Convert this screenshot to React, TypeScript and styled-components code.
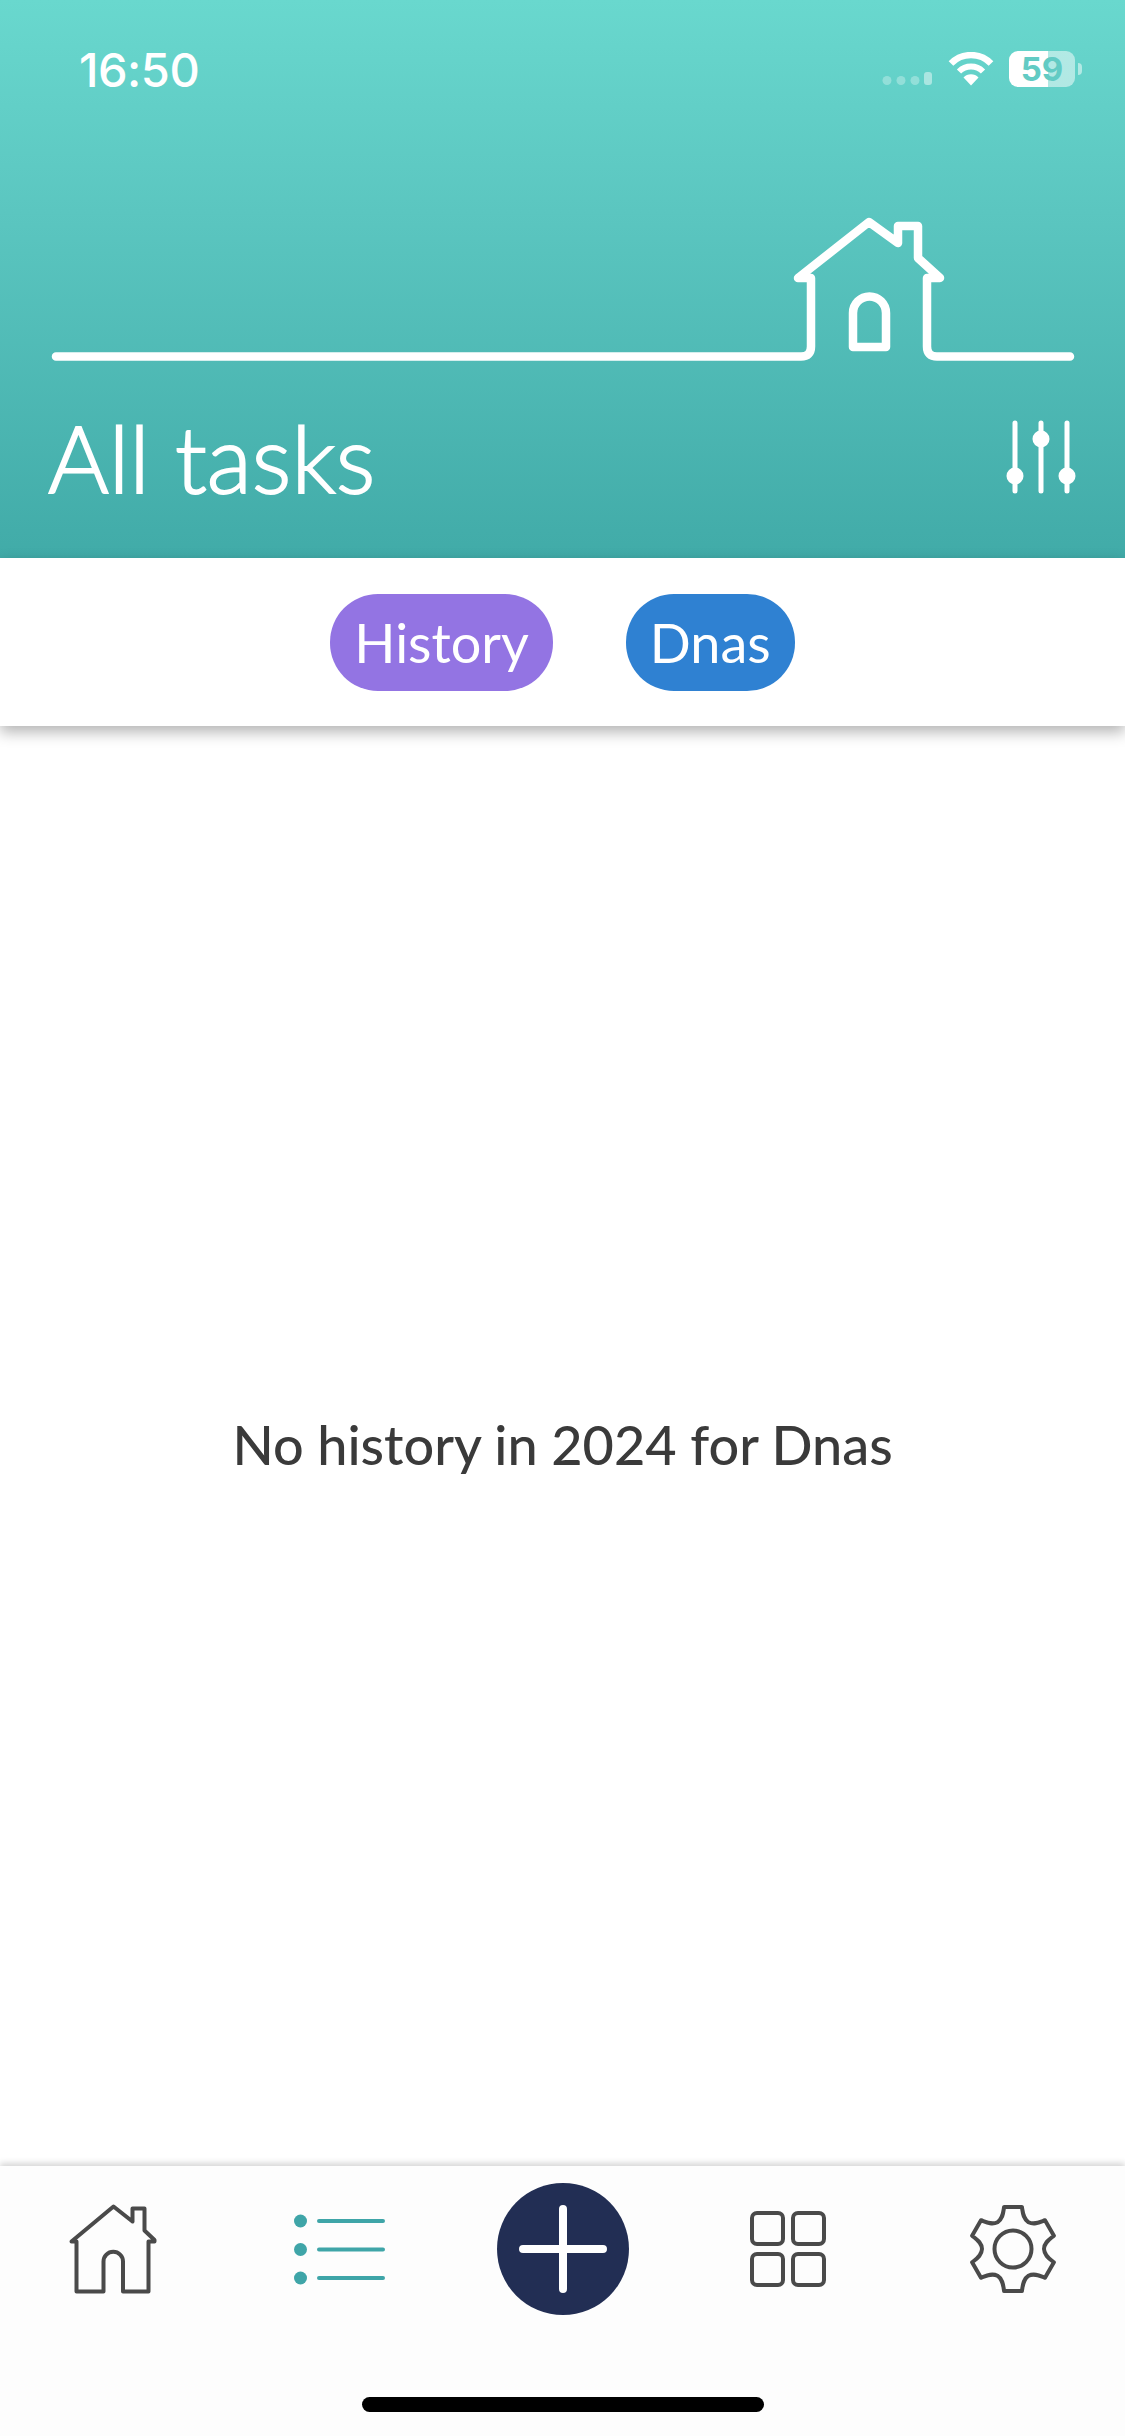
import React from "react";
import styled, { createGlobalStyle } from "styled-components";

const GlobalStyle = createGlobalStyle`
  html, body {
    margin: 0;
    padding: 0;
    background: #ffffff;
  }
  body {
    font-family: "Lato", "Open Sans", sans-serif;
  }
`;

const Page = styled.div`
  width: 1125px;
  height: 2436px;
  display: flex;
  flex-direction: column;
  overflow: hidden;
  background: #ffffff;
`;

const Header = styled.header`
  height: 558px;
  flex: none;
  display: flex;
  flex-direction: column;
  background: linear-gradient(180deg, #69d8ce 0%, #5bc6c0 38%, #41aba8 100%);
`;

const StatusBar = styled.div`
  height: 44px;
  margin-top: 47px;
  padding: 0 50px 0 79px;
  display: flex;
  align-items: center;
  justify-content: space-between;
`;

const Clock = styled.span`
  font-family: "Inter", "Liberation Sans", sans-serif;
  font-size: 47px;
  font-weight: 500;
  letter-spacing: -0.5px;
  color: #ffffff;
`;

const StatusIcons = styled.div`
  display: flex;
  align-items: center;
`;

const SignalIcon = styled.svg`
  margin-top: 17px;
`;

const WifiIcon = styled.svg`
  margin-left: 16px;
`;

const Battery = styled.div`
  position: relative;
  width: 66px;
  height: 36px;
  margin-left: 15px;
  border-radius: 9px;
  background: linear-gradient(90deg, #ffffff 59%, rgba(255, 255, 255, 0.5) 59%);
  display: flex;
  align-items: center;
  justify-content: center;
  font-family: "Inter", "Liberation Sans", sans-serif;
  font-size: 33px;
  font-weight: 700;
  color: #62cbc4;

  &::after {
    content: "";
    position: absolute;
    right: -7px;
    top: 12px;
    width: 4px;
    height: 12px;
    border-radius: 0 6px 6px 0;
    background: rgba(255, 255, 255, 0.5);
  }
`;

const Skyline = styled.svg`
  display: block;
  width: 1125px;
  height: 170px;
  margin-top: 119px;
  flex: none;
`;

const TitleRow = styled.div`
  flex: 1;
  padding: 0 58px 22px 48px;
  display: flex;
  align-items: center;
  justify-content: space-between;
`;

const Title = styled.h1`
  margin: -3px 0 0;
  font-size: 93px;
  font-weight: 300;
  line-height: 100px;
  -webkit-text-stroke: 1.8px #ffffff;
  color: #ffffff;
`;

const SlidersIcon = styled.svg`
  overflow: visible;
`;

const Tabs = styled.nav`
  position: relative;
  height: 168px;
  flex: none;
  display: flex;
  align-items: center;
  justify-content: center;
  gap: 73px;
  background: #ffffff;
  box-shadow: 0 6px 14px rgba(0, 0, 0, 0.3);
`;

const Pill = styled.span<{ $color: string }>`
  height: 97px;
  padding: 0 24px;
  border-radius: 48px;
  display: flex;
  align-items: center;
  background: ${(p) => p.$color};
  font-size: 54px;
  color: #ffffff;
`;

const Content = styled.main`
  flex: 1;
  display: flex;
  align-items: center;
  justify-content: center;
`;

const EmptyText = styled.p`
  margin: 0 0 3px;
  font-size: 54px;
  font-weight: 500;
  color: #3a3a3a;
`;

const BottomBar = styled.footer`
  position: relative;
  height: 270px;
  flex: none;
  box-sizing: border-box;
  padding-top: 17px;
  background: #fdfdfd;
  box-shadow: 0 -3px 6px rgba(0, 0, 0, 0.16);
  display: flex;
  flex-direction: column;
  align-items: center;
`;

const NavRow = styled.div`
  width: 100%;
  height: 132px;
  display: grid;
  grid-template-columns: repeat(5, 225px);
`;

const NavItem = styled.div`
  display: flex;
  align-items: center;
  justify-content: center;
`;

const NavIcon = styled.svg`
  width: 100px;
  height: 100px;
`;

const AddButton = styled.div`
  width: 132px;
  height: 132px;
  border-radius: 50%;
  background: #222e54;
  display: flex;
  align-items: center;
  justify-content: center;
`;

const HomeBar = styled.div`
  width: 402px;
  height: 15px;
  margin-top: 82px;
  border-radius: 8px;
  background: #000000;
`;

// six tooth gear around 50,50
const gearPath = () => {
  const pt = (r: number, deg: number) => {
    const a = (deg * Math.PI) / 180;
    return `${(50 + r * Math.cos(a)).toFixed(1)} ${(50 + r * Math.sin(a)).toFixed(1)}`;
  };
  let d = "";
  for (let i = 0; i < 6; i++) {
    const a = -90 + i * 60;
    d += `${i === 0 ? "M" : "L"}${pt(43, a - 12)} L${pt(43, a + 12)} `;
    d += `C${pt(38, a + 15)} ${pt(32, a + 18)} ${pt(31, a + 30)} `;
    d += `C${pt(32, a + 42)} ${pt(38, a + 45)} ${pt(43, a + 48)} `;
  }
  return d + "Z";
};

const Wifi = () => (
  <WifiIcon width="46" height="34" viewBox="0 0 46 34" fill="none">
    <path d="M3 11.5A28 28 0 0 1 43 11.5" stroke="#fff" strokeWidth="6.5" />
    <path d="M11 19.5A17 17 0 0 1 35 19.5" stroke="#fff" strokeWidth="6" />
    <path d="M23 33.5L15.5 25.5A10.5 10.5 0 0 1 30.5 25.5Z" fill="#fff" />
  </WifiIcon>
);

const Signal = () => (
  <SignalIcon width="50" height="16" viewBox="0 0 50 16" fill="#fff">
    <circle cx="5" cy="10.5" r="4.5" opacity="0.3" />
    <circle cx="19" cy="10.5" r="4.5" opacity="0.3" />
    <circle cx="33" cy="10.5" r="4.5" opacity="0.3" />
    <rect x="42" y="2" width="8" height="13" rx="3" opacity="0.45" />
  </SignalIcon>
);

const SkylineArt = () => (
  <Skyline viewBox="0 0 1125 170" fill="none" stroke="#fff" strokeWidth="8.5" strokeLinecap="round" strokeLinejoin="round">
    <path d="M56 146.500H801Q811 146.500 811 136.500V68H798L869 12L898 33V16H918V48L940 68H927V136.500Q927 146.500 937 146.500H1070" />
    <path d="M853 137V103A16.500 16.500 0 0 1 886 103V137Z" />
  </Skyline>
);

const Sliders = () => (
  <SlidersIcon width="52" height="70" viewBox="0 0 52 70" fill="none" stroke="#fff" strokeWidth="5" strokeLinecap="round">
    <path d="M0 0V68M26 0V68M52 0V68" />
    <g fill="#fff" stroke="none">
      <circle cx="0" cy="53" r="8.5" />
      <circle cx="26" cy="16" r="8.5" />
      <circle cx="52" cy="53" r="8.5" />
    </g>
  </SlidersIcon>
);

const HomeIcon = () => (
  <NavIcon viewBox="0 0 100 100" fill="none" stroke="#4a4a4a" strokeWidth="4" strokeLinejoin="round">
    <path d="M13.500 92.500V42.500H8.500L50.500 7.500L69.500 22.500V9.500H81.500V31.500L91.500 41V42.500H85.500V92.500H60V62.500A9.750 9.750 0 0 0 40.500 62.500V92.500Z" />
  </NavIcon>
);

const ListIcon = () => (
  <NavIcon viewBox="0 0 100 100" fill="#3fa5a8" stroke="none">
    <circle cx="12.500" cy="22" r="6.500" />
    <circle cx="12.500" cy="50.500" r="6.500" />
    <circle cx="12.500" cy="79" r="6.500" />
    <g stroke="#3fa5a8" strokeWidth="4" strokeLinecap="round">
      <path d="M31 22H95M31 50.500H95M31 79H95" />
    </g>
  </NavIcon>
);

const PlusIcon = () => (
  <svg width="88" height="88" viewBox="0 0 88 88" stroke="#fff" strokeWidth="8" strokeLinecap="round">
    <path d="M4 44H84M44 4V84" />
  </svg>
);

const GridIcon = () => (
  <NavIcon viewBox="0 0 100 100" fill="none" stroke="#4a4a4a" strokeWidth="4">
    <rect x="14" y="14" width="31" height="31" rx="5" />
    <rect x="55" y="14" width="31" height="31" rx="5" />
    <rect x="14" y="55" width="31" height="31" rx="5" />
    <rect x="55" y="55" width="31" height="31" rx="5" />
  </NavIcon>
);

const GearIcon = () => (
  <NavIcon viewBox="0 0 100 100" fill="none" stroke="#4a4a4a" strokeWidth="4" strokeLinejoin="round">
    <path d={gearPath()} />
    <circle cx="50" cy="50" r="18.500" />
  </NavIcon>
);

export default function App() {
  return (
    <Page>
      <GlobalStyle />
      <Header>
        <StatusBar>
          <Clock>16:50</Clock>
          <StatusIcons>
            <Signal />
            <Wifi />
            <Battery>59</Battery>
          </StatusIcons>
        </StatusBar>
        <SkylineArt />
        <TitleRow>
          <Title>All tasks</Title>
          <Sliders />
        </TitleRow>
      </Header>
      <Tabs>
        <Pill $color="#9374e3">History</Pill>
        <Pill $color="#2f81d2">Dnas</Pill>
      </Tabs>
      <Content>
        <EmptyText>No history in 2024 for Dnas</EmptyText>
      </Content>
      <BottomBar>
        <NavRow>
          <NavItem><HomeIcon /></NavItem>
          <NavItem><ListIcon /></NavItem>
          <NavItem>
            <AddButton><PlusIcon /></AddButton>
          </NavItem>
          <NavItem><GridIcon /></NavItem>
          <NavItem><GearIcon /></NavItem>
        </NavRow>
        <HomeBar />
      </BottomBar>
    </Page>
  );
}
